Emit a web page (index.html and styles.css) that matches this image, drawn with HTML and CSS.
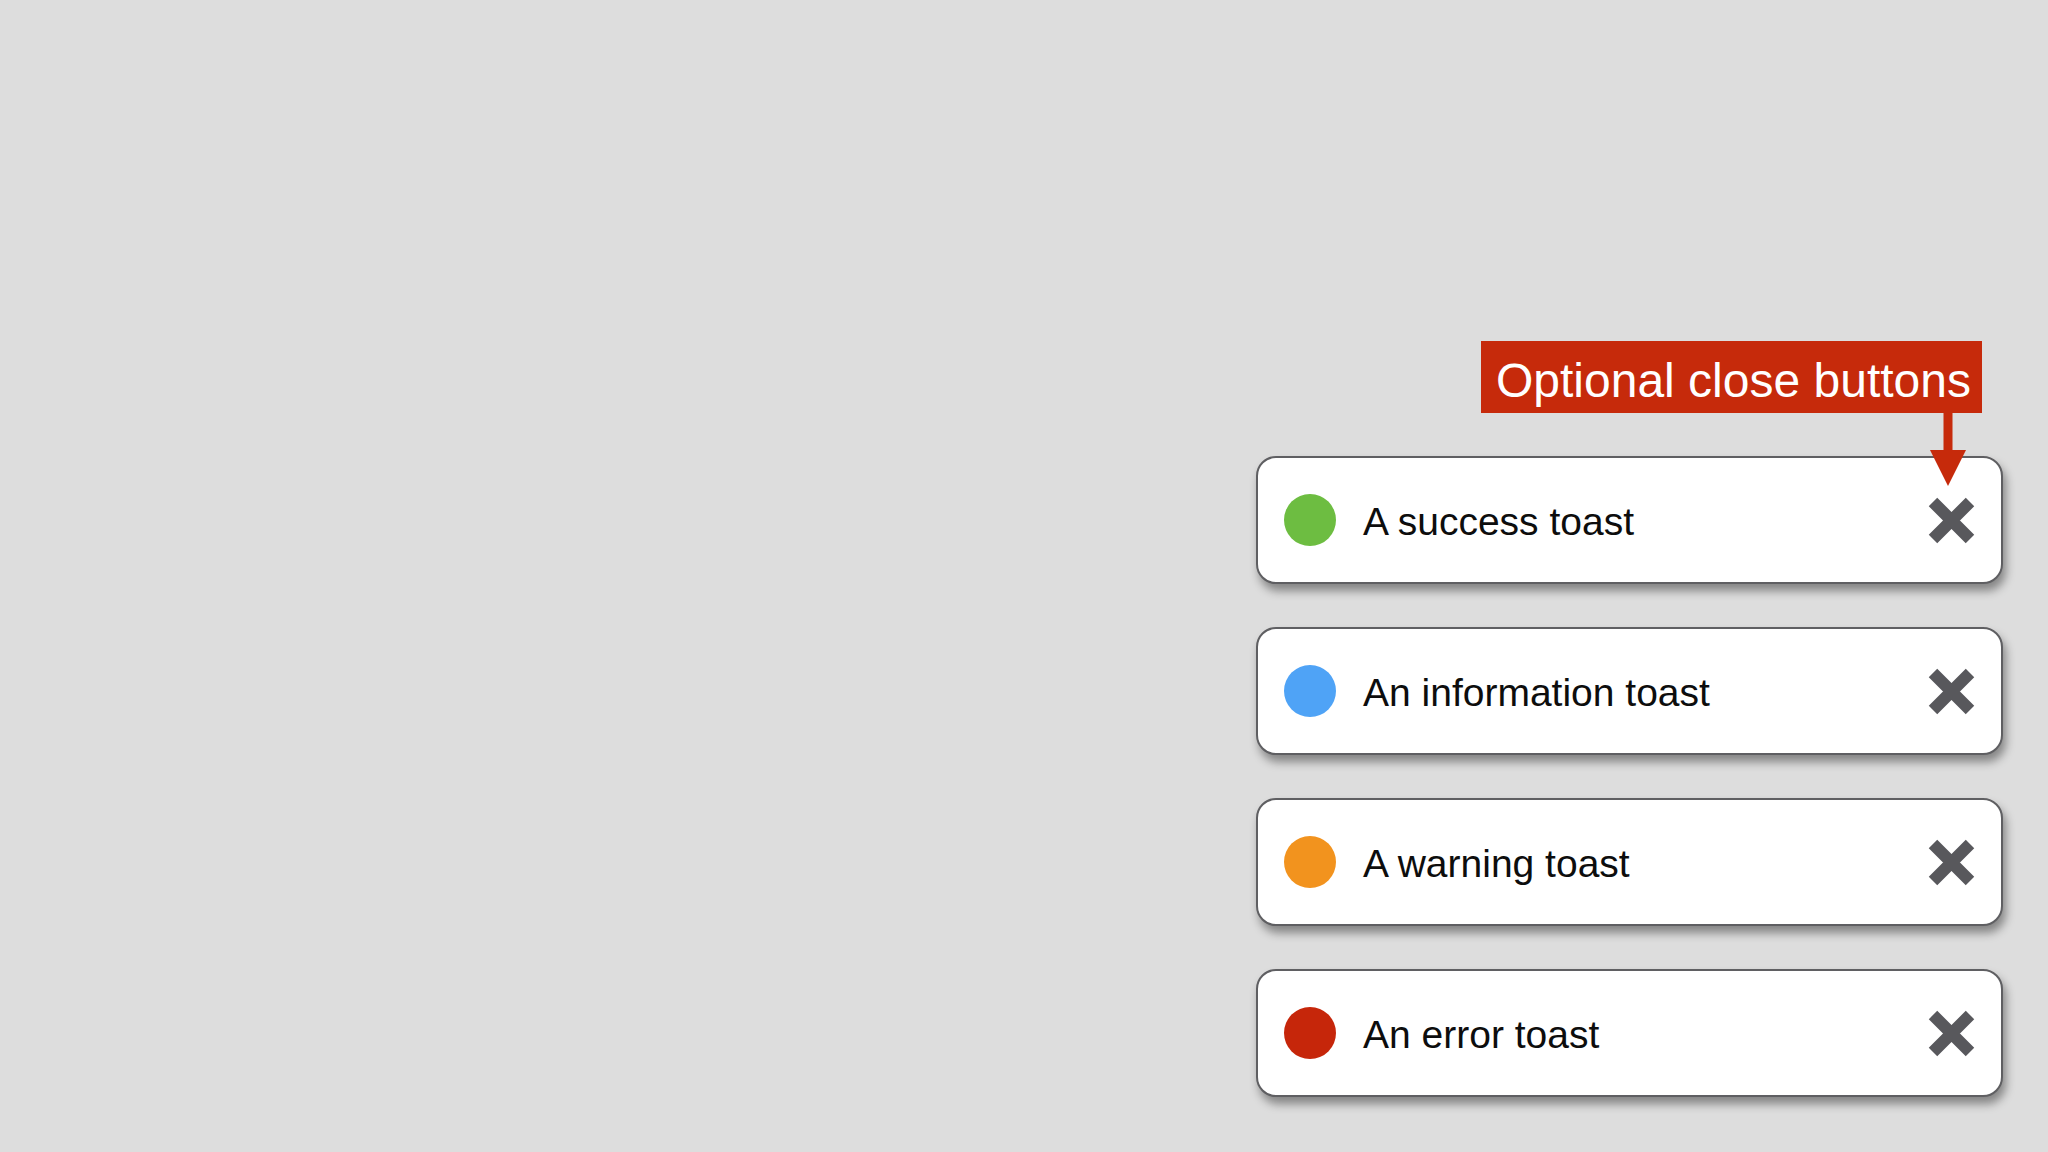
FILE: index.html
```html
<!DOCTYPE html>
<html lang="en">
<head>
<meta charset="utf-8">
<title>Toasts</title>
<link rel="stylesheet" href="styles.css">
</head>
<body>
<div class="stage">
  <div class="column">
    <div class="callout">
      <div class="callout-label">Optional close buttons</div>
      <svg class="callout-arrow" width="36" height="73" viewBox="0 0 36 73">
        <rect x="13.5" y="0" width="9" height="40" fill="#c62a0b"/>
        <polygon points="0,37 36,37 18,73" fill="#c62a0b"/>
      </svg>
    </div>
    <div class="toast-list">
      <div class="toast">
        <span class="dot dot-success"></span>
        <span class="toast-text">A success toast</span>
        <svg class="close" width="47" height="47" viewBox="0 0 47 47"><path d="M5 5 L42 42 M42 5 L5 42" stroke="#58585c" stroke-width="12" fill="none"/></svg>
      </div>
      <div class="toast">
        <span class="dot dot-info"></span>
        <span class="toast-text">An information toast</span>
        <svg class="close" width="47" height="47" viewBox="0 0 47 47"><path d="M5 5 L42 42 M42 5 L5 42" stroke="#58585c" stroke-width="12" fill="none"/></svg>
      </div>
      <div class="toast">
        <span class="dot dot-warning"></span>
        <span class="toast-text">A warning toast</span>
        <svg class="close" width="47" height="47" viewBox="0 0 47 47"><path d="M5 5 L42 42 M42 5 L5 42" stroke="#58585c" stroke-width="12" fill="none"/></svg>
      </div>
      <div class="toast">
        <span class="dot dot-error"></span>
        <span class="toast-text">An error toast</span>
        <svg class="close" width="47" height="47" viewBox="0 0 47 47"><path d="M5 5 L42 42 M42 5 L5 42" stroke="#58585c" stroke-width="12" fill="none"/></svg>
      </div>
    </div>
  </div>
</div>
</body>
</html>
```
FILE: styles.css
```css
html, body {
  margin: 0;
  padding: 0;
  background: #dddddd;
  font-family: "Liberation Sans", Arial, Helvetica, sans-serif;
}
.stage {
  width: 2048px;
  height: 1152px;
  box-sizing: border-box;
  display: flex;
  justify-content: flex-end;
  padding: 341px 45px 0 0;
  overflow: hidden;
}
.column {
  width: 747px;
  display: flex;
  flex-direction: column;
}
.callout {
  align-self: flex-end;
  margin-right: 21px;
  display: flex;
  flex-direction: column;
  align-items: flex-end;
  position: relative;
  z-index: 2;
  margin-bottom: -30px;
}
.callout-label {
  width: 501px;
  height: 72px;
  box-sizing: border-box;
  background: #c62a0b;
  color: #ffffff;
  font-size: 48px;
  line-height: 64px;
  padding: 8px 0 0 15px;
  white-space: nowrap;
  overflow: hidden;
}
.callout-arrow {
  display: block;
  margin-right: 16px;
}
.toast-list {
  display: flex;
  flex-direction: column;
  gap: 43px;
}
.toast {
  height: 128px;
  box-sizing: border-box;
  border: 2px solid #5f5f62;
  border-radius: 20px;
  background: #ffffff;
  box-shadow: 3px 7px 10px rgba(0, 0, 0, 0.4);
  display: flex;
  align-items: center;
  padding: 0 26px;
  gap: 27px;
}
.dot {
  width: 52px;
  height: 52px;
  border-radius: 50%;
  flex: none;
}
.dot-success { background: #6dbd41; }
.dot-info { background: #4fa3f6; }
.dot-warning { background: #f2931e; }
.dot-error { background: #c6260a; }
.toast-text {
  flex: 1;
  font-size: 39px;
  color: #0d0d0d;
  white-space: nowrap;
  padding-top: 4px;
}
.close {
  display: block;
  flex: none;
}
```
